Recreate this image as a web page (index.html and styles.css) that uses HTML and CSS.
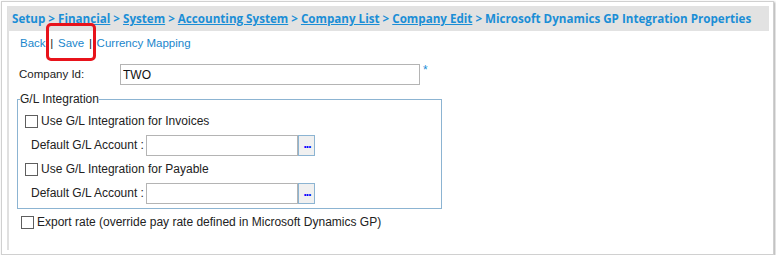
FILE: index.html
```html
<!DOCTYPE html>
<html lang="en">
  <head>
    <meta charset="UTF-8" />
    <meta name="viewport" content="width=device-width, initial-scale=1.0">
    <title>Microsoft Dynamics GP Integration Properties</title>
    <link rel="stylesheet" href="styles.css">
  </head>
  <body>
    <div class="frame">
      <div class="panel">
        <!-- Breadcrumbs -->
        <div class="crumbs">
          <span>Setup</span> &gt; <a href="#">Financial</a> &gt; <a href="#">System</a> &gt; <a href="#">Accounting System</a> &gt; <a href="#">Company List</a> &gt; <a href="#">Company Edit</a> &gt; <span>Microsoft Dynamics GP Integration Properties</span>
        </div>

        <!-- Actions -->
        <div class="actions">
          <a href="#">Back</a> <span class="sep">|</span> <a href="#">Save</a> <span class="sep">|</span> <a href="#">Currency Mapping</a>
        </div>

        <div class="form">
          <div class="company-row">
            <label class="company-label" for="companyId">Company Id:</label>
            <input class="text-input company-input" id="companyId" type="text" value="TWO">
            <span class="required">*</span>
          </div>

          <fieldset class="gl-box">
            <legend>G/L Integration</legend>

            <label class="check-row">
              <input type="checkbox" class="check"> Use G/L Integration for Invoices
            </label>
            <div class="account-row">
              <span class="account-label">Default G/L Account :</span>
              <input class="text-input account-input" type="text">
              <button class="lookup" type="button">...</button>
            </div>

            <label class="check-row">
              <input type="checkbox" class="check"> Use G/L Integration for Payable
            </label>
            <div class="account-row">
              <span class="account-label">Default G/L Account :</span>
              <input class="text-input account-input" type="text">
              <button class="lookup" type="button">...</button>
            </div>
          </fieldset>

          <label class="check-row export-row">
            <input type="checkbox" class="check"> Export rate (override pay rate defined in Microsoft Dynamics GP)
          </label>
        </div>
      </div>

      <!-- Выделение кнопки Save -->
      <div class="highlight"></div>
    </div>
  </body>
</html>
```

FILE: styles.css
```css
body {
  margin: 0;
  padding: 0;
  background-color: #ffffff;
  font-family: "Liberation Sans", Arial, sans-serif;
  font-size: 12px;
  color: #222222;
  overflow: hidden;
}

.frame {
  position: relative;
  margin: 1px 0 0 1px;
  width: 762px;
  height: 246px;
  padding: 4px 4px 2px 5px;
  border: 1px solid #d0d0d0;
  box-sizing: content-box;
  box-shadow: 1px 1px 2px rgba(0, 0, 0, 0.35);
}

.panel {
  height: 244px;
  border-left: 2px solid #e0e0e0;
}

.crumbs {
  height: 25px;
  margin-left: -1px;
  padding-left: 4px;
  background-color: #e2e2e2;
  font-family: "Open Sans", sans-serif;
  font-weight: 700;
  font-size: 11.63px;
  line-height: 25px;
  color: #1b8ed6;
  white-space: nowrap;
  overflow: hidden;
}

.crumbs a {
  color: #1b8ed6;
  text-decoration: underline;
}

.actions {
  margin-top: 4px;
  padding-left: 11px;
  font-size: 11.5px;
  line-height: 16px;
}

.actions a {
  color: #1a86cc;
  text-decoration: none;
}

.actions .sep {
  margin: 0 1.5px;
  color: #222222;
}

.form {
  padding-left: 8px;
}

.company-row {
  display: flex;
  align-items: flex-start;
  margin-top: 13px;
  padding-left: 2px;
}

.company-label {
  width: 101px;
  font-size: 11.5px;
  line-height: 21px;
}

.text-input {
  height: 21px;
  box-sizing: border-box;
  margin: 0;
  padding: 0 2px;
  border: 1px solid #b4b4b4;
  font-family: "Liberation Sans", Arial, sans-serif;
  font-size: 12px;
  color: #111111;
  outline: none;
}

.company-input {
  width: 300px;
}

.required {
  margin-left: 3px;
  color: #1b8ed6;
  font-size: 12px;
  line-height: 12px;
}

.gl-box {
  width: 425px;
  box-sizing: border-box;
  margin: 6px 0 0 0;
  padding: 0 0 4px 0;
  border: 1px solid #8cb4d2;
}

.gl-box legend {
  margin-left: 2px;
  padding: 0;
  line-height: 16px;
}

.check-row {
  display: flex;
  align-items: center;
  gap: 3px;
  height: 16px;
  line-height: 16px;
}

.gl-box .check-row {
  margin: 6px 0 0 7px;
}

.check {
  appearance: none;
  -webkit-appearance: none;
  width: 13px;
  height: 13px;
  margin: 0;
  border: 1px solid #5e5e5e;
  border-radius: 0;
  background-color: #ffffff;
  box-sizing: border-box;
}

.account-row {
  display: flex;
  align-items: center;
  margin: 6px 0 0 13px;
}

.gl-box .account-row + .check-row {
  margin-top: 5px;
}

.account-label {
  width: 115px;
  line-height: 21px;
}

.account-input {
  width: 152px;
}

.lookup {
  width: 17px;
  height: 21px;
  margin: 0;
  padding: 0 0 3px 0;
  border: 1px solid #8cb4d2;
  background-color: #f0f0f0;
  color: #0000ff;
  font-family: "Liberation Sans", Arial, sans-serif;
  font-size: 12px;
  font-weight: 700;
  line-height: 12px;
  letter-spacing: -1px;
  text-indent: 1px;
  box-sizing: border-box;
}

.export-row {
  margin: 5px 0 0 4px;
}

.highlight {
  position: absolute;
  left: 44px;
  top: 21px;
  width: 50px;
  height: 38px;
  border: 3px solid #e8131b;
  border-radius: 5px;
  box-sizing: border-box;
}
```
